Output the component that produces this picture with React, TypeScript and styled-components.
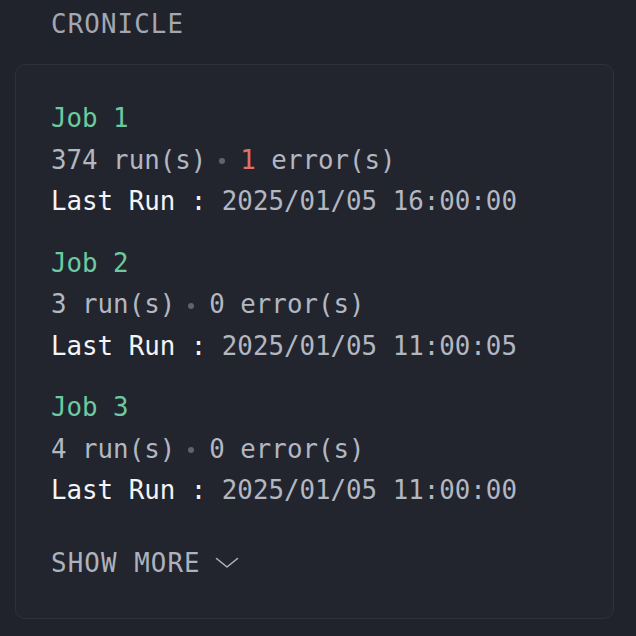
import React from "react";
import styled, { createGlobalStyle } from "styled-components";

const Global = createGlobalStyle`
  html, body { margin: 0; padding: 0; background: #20232b; }
  body { font-family: "DejaVu Sans Mono", "Liberation Mono", monospace; }
`;

const Page = styled.div`
  width: 636px;
  height: 636px;
  box-sizing: border-box;
  padding: 4px 22px 0 15px;
  background: #20232b;
  display: flex;
  flex-direction: column;
  gap: 20px;
`;

const Title = styled.h2`
  margin: 0;
  padding-left: 36px;
  font-size: 25.8px;
  font-weight: 400;
  line-height: 40px;
  letter-spacing: 1.1px;
  color: #a3a7b2;
`;

const Card = styled.section`
  background: #22252e;
  border: 1px solid #2e313a;
  border-radius: 10px;
  padding: 33px 35px 34px;
  display: flex;
  flex-direction: column;
  gap: 20px;
`;

const Job = styled.div`
  display: flex;
  flex-direction: column;
`;

const Line = styled.div<{ $tone?: "green" | "gray" | "white" }>`
  font-size: 25.8px;
  line-height: 41.5px;
  white-space: pre;
  display: flex;
  align-items: center;
  color: ${(p) =>
    p.$tone === "green" ? "#6ccaa0" : p.$tone === "white" ? "#f3f4f6" : "#b3b7c2"};
`;

const Dot = styled.span`
  display: inline-block;
  width: 6px;
  height: 6px;
  border-radius: 50%;
  background: #5d6373;
  margin: 2px 15px 0 13px;
`;

const Num = styled.span<{ $error?: boolean }>`
  color: ${(p) => (p.$error ? "#e2706a" : "inherit")};
`;

const Value = styled.span`
  color: #b3b7c2;
`;

const ShowMore = styled.button`
  margin-top: 11px;
  padding: 0;
  border: none;
  background: none;
  font-family: inherit;
  font-size: 25.8px;
  line-height: 41.5px;
  letter-spacing: 1.1px;
  color: #aeb2bd;
  display: flex;
  align-items: center;
  gap: 14px;
  cursor: pointer;
  align-self: flex-start;
`;

const jobs = [
  { name: "Job 1", runs: 374, errors: 1, last: "2025/01/05 16:00:00" },
  { name: "Job 2", runs: 3, errors: 0, last: "2025/01/05 11:00:05" },
  { name: "Job 3", runs: 4, errors: 0, last: "2025/01/05 11:00:00" },
];

export default function App() {
  return (
    <>
      <Global />
      <Page>
        <Title>CRONICLE</Title>
        <Card>
          {jobs.map((j) => (
            <Job key={j.name}>
              <Line $tone="green">{j.name}</Line>
              <Line>
                {`${j.runs} run(s)`}
                <Dot />
                <Num $error={j.errors > 0}>{j.errors}</Num>
                {" error(s)"}
              </Line>
              <Line $tone="white">
                {"Last Run : "}
                <Value>{j.last}</Value>
              </Line>
            </Job>
          ))}
          <ShowMore>
            SHOW MORE
            <svg width="24" height="12" viewBox="0 0 24 12" fill="none">
              <path d="M1.5 1.5 L12 10 L22.5 1.5" stroke="#aeb2bd" strokeWidth="1.6" strokeLinecap="round" strokeLinejoin="round" />
            </svg>
          </ShowMore>
        </Card>
      </Page>
    </>
  );
}
